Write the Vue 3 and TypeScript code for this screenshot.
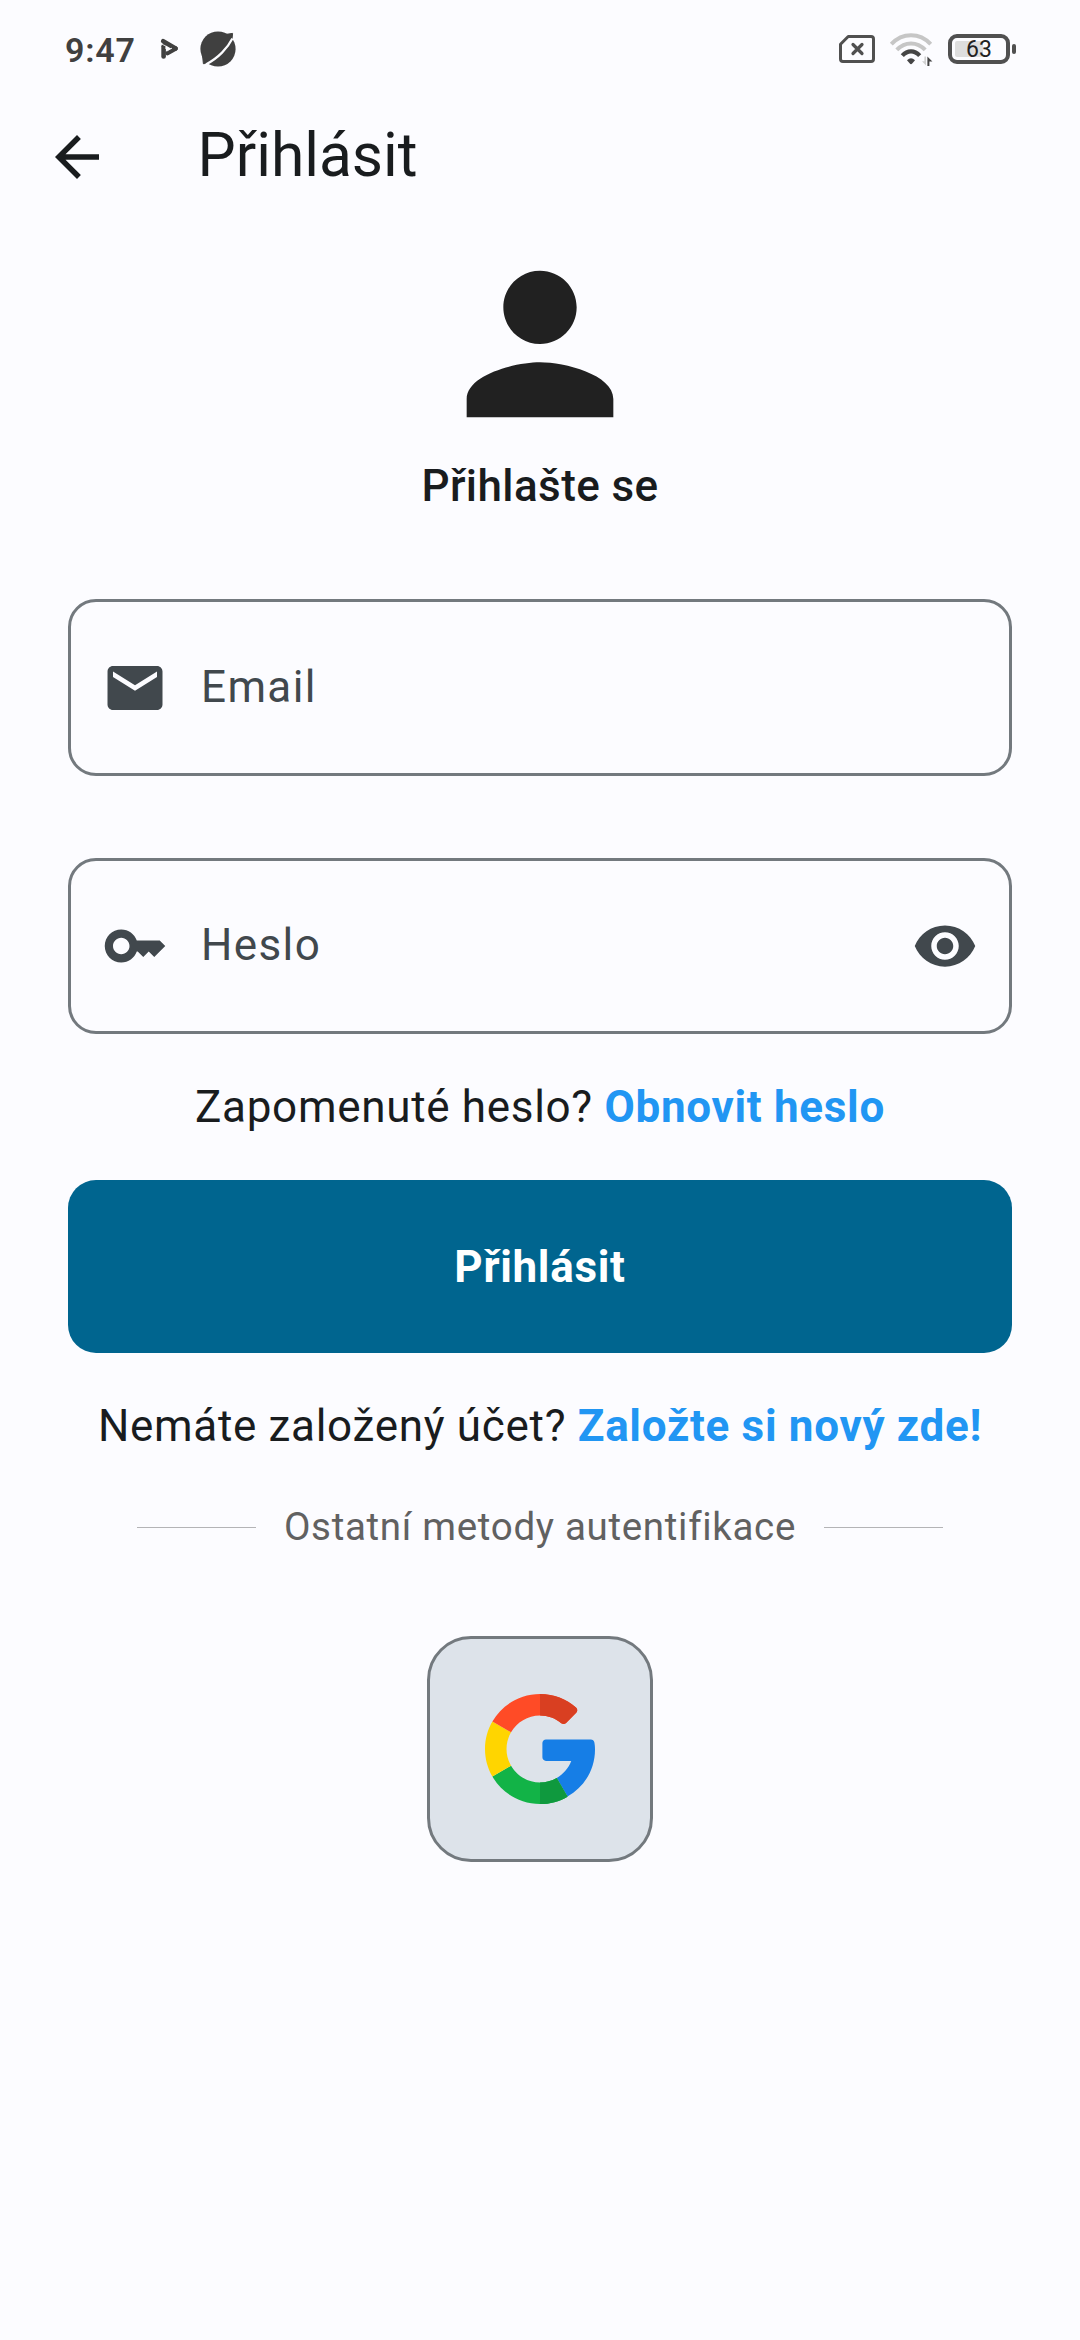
<script setup lang="ts">
import { ref } from 'vue'

const email = ref('')
const password = ref('')
const passwordVisible = ref(false)
const battery = ref(63)
</script>

<template>
  <div class="screen">
    <header class="status">
      <span class="clock">9:47</span>
      <svg class="play" width="20" height="24" viewBox="0 0 20 24">
        <path d="M3.2 4.2 15.6 11.4" stroke="#404040" stroke-width="4.6" stroke-linecap="round" />
        <path d="M3.6 9.2V19.4" stroke="#404040" stroke-width="4.6" stroke-linecap="round" />
        <path d="M7.6 16.2 15.6 11.6" stroke="#404040" stroke-width="4.4" stroke-linecap="round" />
        <path d="M1 6.6 5.8 9.2V12" fill="none" stroke="#fcfcff" stroke-width=".8" />
        <path d="M6.9 14 12 11.1" stroke="#fcfcff" stroke-width=".9" />
      </svg>
      <svg class="planet" width="38" height="38" viewBox="0 0 38 38">
        <circle cx="19" cy="19" r="17.6" fill="#404040" />
        <path d="M26 4.5 33.6 3.4 33 9ZM3.6 26 4.4 33.8 10 33Z" fill="#404040" stroke="#404040" stroke-linejoin="round" />
        <path d="M33.4 8.6C29 17.5 19 28.5 6.8 34.4" fill="none" stroke="#fcfcff" stroke-width="2.2" />
        <path d="M34.6 8 37 12M4.5 34.8 10 37" stroke="#fcfcff" stroke-width="1.2" />
      </svg>
      <span class="grow"></span>
      <svg class="sim" width="38" height="30" viewBox="0 0 38 30">
        <path d="M10.2 2.5H33q2.5 0 2.5 2.5V25q0 2.5-2.5 2.5H5Q2.5 27.5 2.5 25V10.2Z" fill="none" stroke="#505050" stroke-width="3" stroke-linejoin="round" />
        <path d="M15 10.5 24 19.5M24 10.5 15 19.5" stroke="#505050" stroke-width="3.2" stroke-linecap="round" />
      </svg>
      <svg class="wifi" width="46" height="36" viewBox="0 0 46 36">
        <g fill="none">
          <path d="M2.3 13.2C13.5 1.4 30.5 1.4 41.7 13.2" stroke="#c6c6c6" stroke-width="4" />
          <path d="M7.8 18.9C16 10.2 28 10.2 36.2 18.9" stroke="#c6c6c6" stroke-width="4" />
          <path d="M13.3 24.7C18.5 18.9 25.5 18.9 30.7 24.7" stroke="#454545" stroke-width="4.2" />
        </g>
        <path d="M18 29.3Q22 25 26 29.3L23.2 32.6Q22 33.7 20.8 32.6Z" fill="#454545" />
        <path d="M35.4 25.5H37V34.5L33 30.3H35.4Z" fill="#d0d0d0" />
        <path d="M38.4 35V25.5L43.4 30.6H40.4V35Z" fill="#454545" />
      </svg>
      <div class="battery">
        <div class="cell">
          <div class="charge"></div>
          <span class="level">{{ battery }}</span>
        </div>
        <i class="nub"></i>
      </div>
    </header>

    <nav class="appbar">
      <svg class="icon" viewBox="0 0 24 24">
        <path fill="#191c1e" d="M20 11H7.83l5.59-5.59L12 4l-8 8 8 8 1.41-1.41L7.83 13H20v-2z" />
      </svg>
      <h1>Přihlásit</h1>
    </nav>

    <main>
      <svg class="avatar" viewBox="0 0 24 24">
        <path fill="#212121" d="M12 12c2.21 0 4-1.79 4-4s-1.79-4-4-4-4 1.79-4 4 1.79 4 4 4zm0 2c-2.67 0-8 1.34-8 4v2h16v-2c0-2.66-5.33-4-8-4z" />
      </svg>
      <h2>Přihlašte se</h2>

      <label class="field">
        <svg class="icon" viewBox="0 0 24 24">
          <path fill="#41484d" d="M20 4H4c-1.1 0-1.99.9-1.99 2L2 18c0 1.1.9 2 2 2h16c1.1 0 2-.9 2-2V6c0-1.1-.9-2-2-2zm0 4l-8 5-8-5V6l8 5 8-5v2z" />
        </svg>
        <input v-model="email" type="email" placeholder="Email" />
      </label>

      <label class="field second">
        <svg class="icon" viewBox="0 0 24 24">
          <path fill="#41484d" d="M21 10h-8.35C11.83 7.67 9.61 6 7 6c-3.31 0-6 2.69-6 6s2.69 6 6 6c2.61 0 4.83-1.67 5.65-4H13l2 2 2-2 2 2 4-4.04L21 10zM7 15c-1.65 0-3-1.35-3-3s1.35-3 3-3 3 1.35 3 3-1.35 3-3 3z" />
        </svg>
        <input v-model="password" :type="passwordVisible ? 'text' : 'password'" placeholder="Heslo" />
        <svg class="icon" viewBox="0 0 24 24" @click.prevent="passwordVisible = !passwordVisible">
          <path fill="#41484d" d="M12 4.5C7 4.5 2.73 7.61 1 12c1.73 4.39 6 7.5 11 7.5s9.27-3.11 11-7.5c-1.73-4.39-6-7.5-11-7.5zM12 17c-2.76 0-5-2.24-5-5s2.24-5 5-5 5 2.24 5 5-2.24 5-5 5zm0-8c-1.66 0-3 1.34-3 3s1.34 3 3 3 3-1.34 3-3-1.34-3-3-3z" />
        </svg>
      </label>

      <p class="forgot">Zapomenuté heslo? <a>Obnovit heslo</a></p>
      <button class="submit">Přihlásit</button>
      <p class="register">Nemáte založený účet? <a>Založte si nový zde!</a></p>

      <div class="divider">
        <i></i>
        <span>Ostatní metody autentifikace</span>
        <i></i>
      </div>

      <button class="google" aria-label="Google">
        <svg viewBox="0 0 512 512" width="110" height="110">
          <path fill="#167EE6" d="M492.668 211.489l-208.84-.01c-9.222 0-16.697 7.474-16.697 16.696v66.715c0 9.22 7.475 16.696 16.696 16.696h117.606c-12.878 33.421-36.914 61.41-67.58 79.194L384 477.589c80.442-46.523 128-128.152 128-219.53 0-13.011-.959-22.312-2.877-32.785-1.458-7.957-8.366-13.785-16.455-13.785z" />
          <path fill="#12B347" d="M256 411.826c-57.554 0-107.798-31.446-134.783-77.979l-86.806 50.034C78.586 460.443 161.34 512 256 512c46.437 0 90.254-12.503 128-34.292v-.119l-50.147-86.81c-22.938 13.304-49.482 21.047-77.853 21.047z" />
          <path fill="#0F993E" d="M384 477.708v-.119l-50.147-86.81c-22.938 13.303-49.48 21.047-77.853 21.047V512c46.437 0 90.256-12.503 128-34.292z" />
          <path fill="#FFD500" d="M100.174 256c0-28.369 7.742-54.91 21.043-77.847l-86.806-50.034C12.502 165.746 0 209.444 0 256s12.502 90.254 34.411 127.881l86.806-50.034c-13.301-22.937-21.043-49.478-21.043-77.847z" />
          <path fill="#FF4B26" d="M256 100.174c37.531 0 72.005 13.336 98.932 35.519 6.643 5.472 16.298 5.077 22.383-1.008l47.27-47.27c6.904-6.904 6.412-18.205-.963-24.603C378.507 23.673 319.807 0 256 0 161.34 0 78.586 51.557 34.411 128.119l86.806 50.034c26.985-46.533 77.229-77.979 134.783-77.979z" />
          <path fill="#D93F21" d="M354.932 135.693c6.643 5.472 16.299 5.077 22.383-1.008l47.27-47.27c6.903-6.904 6.411-18.205-.963-24.603C378.507 23.672 319.807 0 256 0v100.174c37.53 0 72.005 13.336 98.932 35.519z" />
        </svg>
      </button>
    </main>
  </div>
</template>

<style>
body {
  background: #fcfcff;
}
</style>

<style scoped>
.screen {
  box-sizing: border-box;
  width: 1080px;
  height: 2340px;
  background: #fcfcff;
  color: #191c1e;
  font-family: Roboto, 'Noto Sans', sans-serif;
  overflow: hidden;
}

svg {
  display: block;
  flex: none;
}

.icon {
  width: 66px;
  height: 66px;
}

.status {
  display: flex;
  align-items: center;
  height: 98px;
  padding: 0 64px 0 65px;
}

.clock {
  width: 95px;
  padding-top: 2px;
  font-size: 34px;
  font-weight: 600;
  line-height: 40px;
  letter-spacing: 0.8px;
  color: #404040;
}

.play {
  margin-right: 19px;
}

.grow {
  flex: 1;
}

.sim {
  margin-right: 13px;
}

.wifi {
  margin-right: 13px;
}

.battery {
  display: flex;
  align-items: center;
  gap: 2px;
}

.cell {
  display: grid;
  box-sizing: border-box;
  width: 62px;
  height: 30px;
  padding: 3px;
  border: 4px solid #505050;
  border-radius: 9px;
}

.charge {
  grid-area: 1 / 1;
  width: 28px;
  height: 16px;
  border-radius: 2px;
  background: #dedede;
}

.level {
  grid-area: 1 / 1;
  justify-self: center;
  font-size: 23px;
  font-weight: 400;
  line-height: 18px;
  color: #222;
}

.nub {
  width: 4px;
  height: 10px;
  border-radius: 2px;
  background: #505050;
}

.appbar {
  display: flex;
  align-items: center;
  height: 118px;
  padding-left: 44px;
}

h1 {
  margin: 0 0 2px 87.5px;
  font-size: 60.5px;
  font-weight: 400;
  line-height: 76px;
}

main {
  display: flex;
  flex-direction: column;
  align-items: center;
  padding: 18px 68px 0;
}

.avatar {
  width: 220px;
  height: 220px;
}

h2 {
  margin: 0;
  font-size: 44px;
  font-weight: 500;
  line-height: 64px;
  letter-spacing: 0.4125px;
}

.field {
  display: flex;
  align-items: center;
  box-sizing: border-box;
  width: 944px;
  height: 177px;
  margin-top: 81px;
  padding: 0 31px;
  border: 3px solid #73797e;
  border-radius: 28px;
}

.field input {
  flex: 1;
  min-width: 0;
  margin: 0 0 2px 33px;
  padding: 0;
  border: 0;
  outline: 0;
  background: transparent;
  color: #191c1e;
  font: 400 44px / 66px Roboto, 'Noto Sans', sans-serif;
  letter-spacing: 1.375px;
}

.field input::placeholder {
  color: #41484d;
  opacity: 1;
}

.second {
  height: 176px;
  margin-top: 82px;
}

p {
  margin: 0;
  font-size: 44px;
  line-height: 66px;
  letter-spacing: 0.69px;
  white-space: nowrap;
}

p a {
  color: #2196f3;
  font-weight: 700;
}

.forgot {
  margin-top: 40px;
}

.submit {
  width: 944px;
  height: 173px;
  margin-top: 40px;
  padding: 0;
  border: 0;
  border-radius: 28px;
  background: #00658f;
  color: #fff;
  font: 700 44px / 60px Roboto, 'Noto Sans', sans-serif;
  letter-spacing: 0.69px;
}

.register {
  margin-top: 40px;
}

.divider {
  display: flex;
  align-items: center;
  justify-content: space-between;
  box-sizing: border-box;
  width: 806px;
  height: 58px;
  margin-top: 39px;
}

.divider i {
  width: 119px;
  height: 1px;
  background: #b4b4b6;
}

.divider span {
  font-size: 38.5px;
  line-height: 58px;
  letter-spacing: 0.69px;
  color: #616161;
}

.google {
  display: flex;
  align-items: center;
  justify-content: center;
  box-sizing: border-box;
  width: 226px;
  height: 226px;
  margin-top: 80px;
  padding: 0;
  border: 3px solid #73797e;
  border-radius: 44px;
  background: #dde3ea;
}
</style>
